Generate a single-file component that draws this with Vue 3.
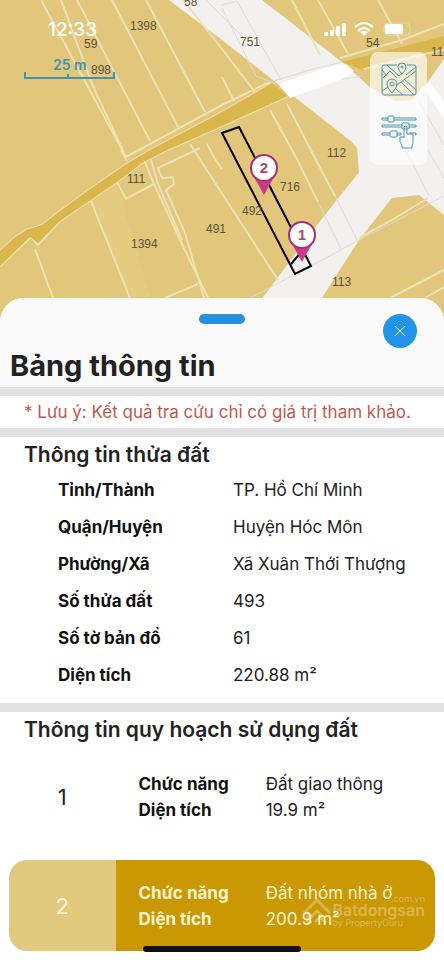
<template>
  <div class="page">
    <header class="map-area">
      <svg class="map" viewBox="0 0 444 330" preserveAspectRatio="xMidYMin slice" aria-hidden="true">
        <rect width="444" height="330" fill="#e1c67b" />

        <!-- khu đất trống -->
        <path class="blank" d="M169 0H262L342 62L371 88L395 101L411 100L427 83L444 59V215L419 195L392 198L359 240L318 304L258 304L317 225L359 172L357 148L352 142L278 84L222 40Z" />

        <!-- dải đất nhạt -->
        <path fill="#e5cb80" d="M92 201L117 183L152 304H130Z" />

        <!-- ranh thửa -->
        <path v-for="(d, i) in parcels" :key="'p' + i" class="parcel" :d="d" />
        <path v-for="(d, i) in grayLines" :key="'g' + i" class="gray-line" :d="d" />

        <!-- đường giao thông -->
        <path class="road" d="M0 251L14 238L26 230L42 225L60 211L90 189L128 163L152 149L222 112L248 97L272 83L288 96L222 126L165 151L142 163L117 182L60 221L38 243L30 237L0 266Z" />
        <path class="road" d="M342 62L444 36V49L400 58L360 69Z" />
        <path fill="#fff" d="M278 84L305 75L330 67L346 64L354 71L340 80L290 98Z" />
        <path fill="#fff" d="M424 89L430 82L444 101V119Z" />

        <!-- thửa đang chọn -->
        <path class="selected" d="M222 133L239 127L311 266L295 274Z" />
        <path class="selected" d="M291 264L302 251" />

        <text v-for="l in labels" :key="l.text" class="parcel-no" :x="l.x" :y="l.y">{{ l.text }}</text>

        <!-- thước tỉ lệ -->
        <path fill="none" stroke="#3c94b4" stroke-width="2" d="M25 72V78H114V72M68 74V78" />
        <text class="scale" x="53" y="70">25 m</text>

        <g v-for="m in markers" :key="m.no" :transform="`translate(${m.x} ${m.y})`">
          <path fill="#c93c85" d="M-10 9L0 27L10 9Z" />
          <circle r="13" fill="#fff" stroke="#a5307a" stroke-width="2" />
          <text class="marker-no" x="0" y="5">{{ m.no }}</text>
        </g>
      </svg>

      <div class="status-bar">
        <span>12:33</span>
        <svg width="88" height="16" viewBox="0 0 88 16" fill="#fff" aria-hidden="true">
          <rect x="0" y="10" width="4" height="4" rx="1" />
          <rect x="6" y="8" width="4" height="6" rx="1" />
          <rect x="12" y="4" width="4" height="10" rx="1" />
          <rect x="18" y="1" width="4" height="13" rx="1" />
          <g fill="none" stroke="#fff" stroke-width="2">
            <path d="M31 5Q40 -3 49 5" />
            <path d="M34 9Q40 3 46 9" />
          </g>
          <path d="M40 14L36 10Q40 7 44 10Z" />
          <rect x="60" y="1" width="26" height="12" rx="4" fill="none" stroke="#fff" stroke-opacity="0.35" />
          <rect x="61" y="2" width="18" height="10" rx="2" />
        </svg>
      </div>

      <div class="tools">
        <button type="button" aria-label="Bản đồ">
          <svg width="36" height="36" viewBox="0 0 36 36">
            <path d="M16 4H3Q1 4 1 6V32Q1 34 3 34H33Q35 34 35 32V6Q35 4 33 4H26" />
            <path d="M1 9L6 15M6 4L18 15M18 15L22 12M25 14L35 6M2 17L9 10L16 17M16 24L35 10M20 21L33 34M23 18L35 29M1 30L7 26M15 28L22 34" />
            <path d="M21 13Q17 9 17 6A4 4 0 0 1 25 6Q25 9 21 13Z" />
            <circle cx="21" cy="6" r="1" />
            <path d="M11 32Q6 27 6 23A5 5 0 0 1 16 23Q16 27 11 32Z" />
            <circle cx="11" cy="23" r="2" />
          </svg>
        </button>
        <button type="button" aria-label="Lớp quy hoạch">
          <svg width="36" height="36" viewBox="0 0 36 36">
            <path d="M7 4H1V6H7M13 4H35V6H13M21 11H1V13H21M28 11H35V13H28M9 19H1V21H9M16 19H20V21H16M28 19H35V21H34" />
            <rect x="7" y="2" width="6" height="6" rx="1" />
            <rect x="9" y="17" width="7" height="6" rx="1" />
            <rect x="21" y="9" width="7" height="6" rx="1" />
            <path d="M23 24V13Q24 11 26 13V20H32V29L31 31V34H21V31L19 28V23H23" />
          </svg>
        </button>
      </div>
    </header>

    <main class="sheet">
      <div class="sheet-head">
        <span class="handle"></span>
        <button type="button" class="close" aria-label="Đóng">
          <svg width="14" height="14" viewBox="0 0 14 14"><path d="M2 2L12 12M12 2L2 12" /></svg>
        </button>
        <h1>Bảng thông tin</h1>
      </div>

      <p class="note">* Lưu ý: Kết quả tra cứu chỉ có giá trị tham khảo.</p>

      <section class="land">
        <h2>Thông tin thửa đất</h2>
        <dl>
          <div v-for="row in landInfo" :key="row.label" class="row">
            <dt>{{ row.label }}</dt>
            <dd>{{ row.value }}</dd>
          </div>
        </dl>
      </section>

      <section class="planning">
        <h2>Thông tin quy hoạch sử dụng đất</h2>
        <article v-for="p in plans" :key="p.no" class="plan" :class="{ active: p.active }">
          <div class="plan-no">{{ p.no }}</div>
          <dl class="plan-info">
            <dt>Chức năng</dt>
            <dd>{{ p.usage }}</dd>
            <dt>Diện tích</dt>
            <dd>{{ p.area }}</dd>
          </dl>
          <div v-if="p.active" class="brand">
            <svg width="30" height="30" viewBox="0 0 30 30" aria-hidden="true">
              <path d="M2 16L15 3L28 16M6 15V25H10M9 20L15 14L21 20M13 25L18 20L24 26" />
            </svg>
            <div class="brand-text">
              <small class="domain">.com.vn</small>
              <strong>Batdongsan</strong>
              <small>by PropertyGuru</small>
            </div>
          </div>
        </article>
      </section>
      <span class="home-bar"></span>
    </main>
  </div>
</template>

<script setup>
const parcels = [
  'M41 0L126 157',
  'M61 0L92 84L126 157',
  'M77 0L150 141',
  'M112 0L178 127',
  'M146 0L205 112',
  'M183 0L222 49L258 96',
  'M126 157L222 105L270 82',
  'M222 77L234 101',
  'M292 0L320 55',
  'M318 0L348 54',
  'M378 0L402 44',
  'M340 58L402 40L444 24',
  'M0 251L14 238L26 230L42 225L60 211L90 189L128 163L152 149L222 112L272 83',
  'M0 266L31 237L38 245L60 221L117 182L142 163L165 151L222 126L288 96',
  'M35 249L53 298',
  'M91 201L130 298',
  'M117 182L126 199L154 184',
  'M145 162L154 184L181 242L208 298',
  'M121 150L127 161',
  'M151 160L158 184L182 240',
  'M200 148L158 168L162 178L173 177L174 184L166 190L185 233L204 298',
  'M165 298L198 284',
  'M190 144L278 280',
  'M207 144L215 159L222 169',
  'M270 110L297 159L318 202',
  'M287 104L316 160L335 196',
  'M390 298L444 270',
  'M425 298L444 287',
  'M364 69L444 49',
  'M359 238L392 220L428 198'
]

const grayLines = [
  'M222 5L237 1L281 80M222 8L256 76L276 84',
  'M206 0L244 38',
  'M318 202L341 249',
  'M335 196L357 240',
  'M250 298L311 266L359 240L444 196',
  'M288 93L320 83L362 76',
  'M274 81L310 70L342 62',
  'M402 143L429 196',
  'M418 100L444 145',
  'M428 150L444 178'
]

const labels = [
  { text: '1398', x: 130, y: 30 },
  { text: '58', x: 184, y: 6 },
  { text: '59', x: 84, y: 48 },
  { text: '898', x: 91, y: 74 },
  { text: '751', x: 240, y: 46 },
  { text: '54', x: 366, y: 47 },
  { text: '114', x: 431, y: 56 },
  { text: '112', x: 327, y: 157 },
  { text: '111', x: 127, y: 183 },
  { text: '716', x: 280, y: 191 },
  { text: '492', x: 242, y: 215 },
  { text: '491', x: 206, y: 233 },
  { text: '1394', x: 131, y: 248 },
  { text: '113', x: 332, y: 286 }
]

const markers = [
  { no: 2, x: 264, y: 168 },
  { no: 1, x: 302, y: 235 }
]

const landInfo = [
  { label: 'Tỉnh/Thành', value: 'TP. Hồ Chí Minh' },
  { label: 'Quận/Huyện', value: 'Huyện Hóc Môn' },
  { label: 'Phường/Xã', value: 'Xã Xuân Thới Thượng' },
  { label: 'Số thửa đất', value: '493' },
  { label: 'Số tờ bản đồ', value: '61' },
  { label: 'Diện tích', value: '220.88 m²' }
]

const plans = [
  { no: 1, usage: 'Đất giao thông', area: '19.9 m²', active: false },
  { no: 2, usage: 'Đất nhóm nhà ở', area: '200.9 m²', active: true }
]
</script>

<style>
body {
  margin: 0;
  background: #fff;
}
</style>

<style scoped>
.page {
  font-family: Inter, 'Noto Sans', sans-serif;
  color: #222;
}
h1,
h2,
p,
dl,
dd {
  margin: 0;
}
button {
  padding: 0;
  border: 0;
  background: none;
  cursor: pointer;
}

/* bản đồ */
.map-area {
  position: relative;
}
.map {
  display: block;
  width: 100%;
  height: 330px;
}
.blank {
  fill: #f3f0f0;
}
.parcel {
  fill: none;
  stroke: #efe1b2;
  stroke-width: 2;
}
.gray-line {
  fill: none;
  stroke: #dddada;
  stroke-width: 1;
}
.road {
  fill: #d9b74d;
}
.selected {
  fill: none;
  stroke: #000;
  stroke-width: 2;
}
.parcel-no {
  font-family: 'Liberation Sans', sans-serif;
  font-size: 12px;
  fill: #5d533b;
}
.scale {
  font-size: 14px;
  font-weight: 600;
  fill: #3c94b4;
}
.marker-no {
  font-family: 'Liberation Sans', sans-serif;
  font-size: 15px;
  font-weight: 700;
  fill: #a34c5c;
  text-anchor: middle;
}
.status-bar {
  position: absolute;
  top: 18px;
  left: 0;
  right: 0;
  display: flex;
  justify-content: space-between;
  align-items: center;
  padding: 0 32px 0 48px;
  color: #fff;
  font-size: 19px;
  line-height: 24px;
  font-weight: 500;
}
.tools {
  position: absolute;
  top: 52px;
  right: 17px;
  display: flex;
  flex-direction: column;
  align-items: center;
  gap: 17px;
  width: 57px;
  padding: 9px 0 15px;
  box-sizing: border-box;
  border-radius: 8px;
  background: rgba(255, 255, 255, 0.65);
}
.tools svg {
  display: block;
  fill: none;
  stroke: #4795b0;
  stroke-width: 1;
}

/* bảng thông tin */
.sheet {
  position: relative;
  margin-top: -32px;
  border-radius: 24px 24px 0 0;
  background: #fff;
  overflow: hidden;
}
.sheet-head {
  position: relative;
  padding: 16px 10px 1px;
  background: #fafafa;
}
.handle {
  display: block;
  width: 46px;
  height: 10px;
  margin: 0 auto;
  border-radius: 5px;
  background: #2790e2;
}
.close {
  position: absolute;
  top: 16px;
  right: 27px;
  display: grid;
  place-items: center;
  width: 34px;
  height: 34px;
  border-radius: 50%;
  background: #2294ea;
}
.close svg {
  fill: none;
  stroke: #fff;
  stroke-width: 1;
}
h1 {
  margin-top: 22px;
  font-size: 29px;
  line-height: 40px;
  font-weight: 700;
}
.note {
  padding: 0 24px;
  border-top: 9px solid #e1e1e1;
  border-bottom: 9px solid #e1e1e1;
  color: #c0594f;
  font-size: 17px;
  line-height: 32px;
  white-space: nowrap;
}
h2 {
  padding: 0 24px;
  font-size: 21px;
  line-height: 35px;
  font-weight: 600;
}
.land {
  padding-bottom: 9px;
  border-bottom: 9px solid #e1e1e1;
}
.row {
  display: grid;
  grid-template-columns: 175fr 211fr;
  padding-left: 58px;
  font-size: 17px;
  line-height: 37px;
}
dt {
  color: #111;
  font-weight: 700;
}
dd {
  white-space: nowrap;
}
.plan {
  position: relative;
  display: flex;
  margin: 4px 9px 18px;
  border-radius: 18px;
  overflow: hidden;
}
.plan-no {
  display: grid;
  place-items: center;
  width: 25%;
  font-size: 22px;
}
.plan-info {
  flex: 1;
  display: grid;
  grid-template-columns: 127fr 169fr;
  align-content: center;
  height: 91px;
  padding-left: 23px;
  font-size: 17px;
  line-height: 26px;
}
.active {
  margin-bottom: 9px;
  color: #fff4cf;
}
.active .plan-no {
  background: #e1c97d;
}
.active .plan-info {
  background: #c99803;
}
.active dt {
  color: #fff4cf;
}
.brand {
  position: absolute;
  right: 10px;
  bottom: 22px;
  display: flex;
  align-items: center;
  color: #fff;
  opacity: 0.3;
}
.brand svg {
  fill: none;
  stroke: #fff;
  stroke-width: 3;
}
.brand-text {
  display: flex;
  flex-direction: column;
}
.brand strong {
  font-size: 16px;
  line-height: 14px;
  font-weight: 600;
}
.brand small {
  font-size: 9px;
  line-height: 12px;
}
.brand .domain {
  align-self: flex-end;
  line-height: 8px;
}
.home-bar {
  position: absolute;
  bottom: 8px;
  left: 50%;
  width: 158px;
  height: 6px;
  border-radius: 3px;
  background: #111;
  transform: translateX(-50%);
}
</style>
